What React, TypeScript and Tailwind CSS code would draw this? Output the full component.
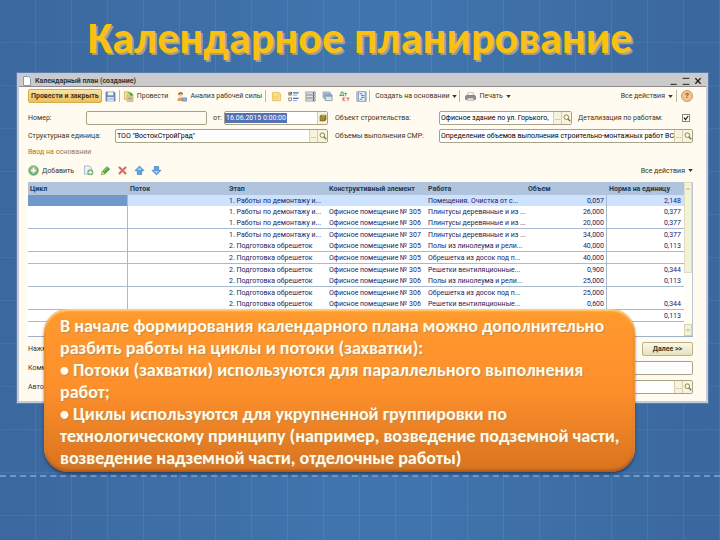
import type { ReactNode } from "react";
import clsx from "clsx";

interface PlanRow {
  stage: string;
  element: string;
  work: string;
  volume: string;
  norm: string;
  line?: boolean;
}

const DEMOLITION = "1. Работы по демонтажу и...";
const LATHING = "2. Подготовка обрешеток";

const rows: PlanRow[] = [
  { stage: DEMOLITION, element: "", work: "Помещения. Очистка от с...", volume: "0,057", norm: "2,148" },
  { stage: DEMOLITION, element: "Офисное помещение № 305", work: "Плинтусы деревянные и из ...", volume: "26,000", norm: "0,377" },
  { stage: DEMOLITION, element: "Офисное помещение № 306", work: "Плинтусы деревянные и из ...", volume: "20,000", norm: "0,377", line: true },
  { stage: DEMOLITION, element: "Офисное помещение № 307", work: "Плинтусы деревянные и из ...", volume: "34,000", norm: "0,377" },
  { stage: LATHING, element: "Офисное помещение № 305", work: "Полы из линолеума и рели...", volume: "40,000", norm: "0,113", line: true },
  { stage: LATHING, element: "Офисное помещение № 305", work: "Обрешетка из досок под п...", volume: "40,000", norm: "", line: true },
  { stage: LATHING, element: "Офисное помещение № 305", work: "Решетки вентиляционные...", volume: "0,900", norm: "0,344" },
  { stage: LATHING, element: "Офисное помещение № 306", work: "Полы из линолеума и рели...", volume: "25,000", norm: "0,113", line: true },
  { stage: LATHING, element: "Офисное помещение № 306", work: "Обрешетка из досок под п...", volume: "25,000", norm: "" },
  { stage: LATHING, element: "Офисное помещение № 306", work: "Решетки вентиляционные...", volume: "0,600", norm: "0,344", line: true },
  { stage: "", element: "", work: "", volume: "", norm: "0,113", line: true },
];

function Svg({ children, className = "size-[11px]" }: { children: ReactNode; className?: string }) {
  return (
    <svg viewBox="0 0 12 12" className={clsx("shrink-0", className)} aria-hidden="true">
      {children}
    </svg>
  );
}

const SaveIcon = () => (
  <Svg>
    <path d="M1 1h9l1 1v9H1z" fill="#6f8fb4" stroke="#50719a" strokeWidth=".6" />
    <path d="M3 1.3h6v3.4H3z" fill="#eef4fa" />
    <path d="M2.5 6.5h7V11h-7z" fill="#dfe9f3" />
    <path d="M3.5 8h5M3.5 9.5h5" stroke="#8ba5c0" strokeWidth=".6" />
  </Svg>
);

const PostIcon = () => (
  <Svg>
    <path d="M1.5.8h5l1.6 1.6v6.8H1.5z" fill="#f7e08a" stroke="#b79a3d" strokeWidth=".6" />
    <path d="M4.5 4.5H11v7H4.5z" fill="#f3dc8c" stroke="#b79a3d" strokeWidth=".6" />
    <path d="M5.6 6.7h4.3M5.6 8.2h4.3M5.6 9.7h4.3" stroke="#6e8fb5" strokeWidth=".7" />
    <path d="M5 1.5h3.2c1.2 0 1.8.7 1.8 1.7h1.4L9.2 5.6 7 3.2h1.3c0-.3-.2-.4-.6-.4H5z" fill="#46a33f" />
  </Svg>
);

const PersonIcon = () => (
  <Svg>
    <path d="M1.5 11c0-3 1-4 3.5-4s3.5 1 3.5 4z" fill="#e3a04e" />
    <circle cx="5" cy="4" r="2.4" fill="#f3c9a0" />
    <path d="M2.4 4C2.2.6 7.8.4 7.6 3.8 6.3 3.5 5.4 2.8 4.8 2.6 4.2 3.4 3.3 3.9 2.4 4z" fill="#8a5526" />
    <path d="M7 7.5h4.5V11H7z" fill="#8eb0dc" stroke="#4a70a8" strokeWidth=".6" />
  </Svg>
);

const NoteIcon = () => (
  <Svg>
    <path d="M1.5 1.5h7l2 2v7h-9z" fill="#f9df82" stroke="#d6b046" strokeWidth=".7" />
    <path d="M8.5 1.5v2h2" fill="#fff5ce" stroke="#d6b046" strokeWidth=".6" />
    <path d="M3 6h5M3 8h5" stroke="#e8c659" strokeWidth=".7" />
  </Svg>
);

const ChecklistIcon = () => (
  <Svg>
    <path d="M.8 1.5h3v3h-3zM.8 7.5h3v3h-3z" fill="#fff" stroke="#555" strokeWidth=".7" />
    <path d="m1.3 2.6.9 1L4.2 1" fill="none" stroke="#222" strokeWidth=".8" />
    <path d="M5.5 2h6M5.5 8h6" stroke="#3b70b9" strokeWidth="1.4" />
    <path d="M5.5 4.5h4.5M5.5 10.5h4.5" stroke="#7fa5d8" strokeWidth="1" />
  </Svg>
);

const StackIcon = () => (
  <Svg>
    <path d="M.8 1h10.4v2.6H.8zM.8 4.7h10.4v2.6H.8zM.8 8.4h10.4V11H.8z" fill="#dfe3e8" stroke="#777f89" strokeWidth=".7" />
    <path d="M9.3 1v2.6M9.3 4.7v2.6M9.3 8.4V11" stroke="#4d5560" strokeWidth="1" />
  </Svg>
);

const CopiesIcon = () => (
  <Svg>
    <path d="M1 1h7.5v6H1z" fill="#ccd9e8" stroke="#7b93b0" strokeWidth=".6" />
    <path d="M2.2 2.5h7.5v6H2.2z" fill="#b5cbe4" stroke="#6b88ab" strokeWidth=".6" />
    <path d="M3.5 4.2H11v6.3H3.5z" fill="#dcecc6" stroke="#5d80aa" strokeWidth=".7" />
    <path d="M3.5 4.2H11v2H3.5z" fill="#79a3d6" />
  </Svg>
);

const DebitCreditIcon = () => (
  <Svg>
    <path d="M.8 5.6V4.8h4.4v.8M1.6 4.8C2.2 3.8 2.3 2.4 2.3 1.2h2.2v3.6" fill="none" stroke="#2e9140" strokeWidth=".9" />
    <path d="M5.8 2.6h3M7.3 2.6v2.7" stroke="#2e9140" strokeWidth=".9" />
    <path d="M4.4 6.5V11M7 6.5 4.6 8.8 7.2 11M8 7.8h3.4M9.7 7.8V11" fill="none" stroke="#d44a4a" strokeWidth=".9" />
  </Svg>
);

const ReportIcon = () => (
  <Svg>
    <path d="M.8 .8h10.4v10.4H.8z" fill="#a9c8e8" stroke="#6f93bb" strokeWidth=".6" />
    <path d="M2.8 .8h7v10.4h-7z" fill="#f5faff" stroke="#587ba5" strokeWidth=".6" />
    <path d="M4 3h3M5.5 5H9M5.5 7H9M4 9h3" stroke="#2f5f9b" strokeWidth=".9" />
  </Svg>
);

const PrinterIcon = () => (
  <Svg>
    <path d="M3 1.8h6V5H3z" fill="#fff" stroke="#999" strokeWidth=".6" />
    <path d="M1.2 4.8h9.6l.7 1.2v3.2H.5V6z" fill="#8d8d92" stroke="#5c5c62" strokeWidth=".6" />
    <path d="M2.5 7.6h7v2.6h-7z" fill="#f3e6e2" stroke="#777" strokeWidth=".5" />
  </Svg>
);

const AddIcon = () => (
  <Svg>
    <circle cx="6" cy="6" r="5.3" fill="#74b272" stroke="#5a9459" strokeWidth=".6" />
    <circle cx="6" cy="4.6" r="3.6" fill="#a5d19f" opacity=".6" />
    <path d="M6 3v6M3 6h6" stroke="#fff" strokeWidth="1.7" />
  </Svg>
);

const AddCopyIcon = () => (
  <Svg>
    <path d="M1.5 1h5.5l2.2 2.2V10H1.5z" fill="#eaf1f8" stroke="#8199b4" strokeWidth=".7" />
    <circle cx="8" cy="8" r="3.3" fill="#6db36a" />
    <path d="M8 6v4M6 8h4" stroke="#fff" strokeWidth="1.2" />
  </Svg>
);

const PencilIcon = () => (
  <Svg>
    <path d="M1.5 10.7 2.4 7 7.6 1.8l3 2.5-5.4 5.5z" fill="#4cae3a" stroke="#2c7f23" strokeWidth=".6" />
    <path d="M1.5 10.7 2.4 7l2.8 2.8z" fill="#e8d28c" />
    <path d="M3.8 7.2 8.3 2.7" stroke="#a9de92" strokeWidth=".9" />
  </Svg>
);

const DeleteIcon = () => (
  <Svg>
    <path d="m2 2 8 8M10 2l-8 8" stroke="#e98d84" strokeWidth="2.6" />
    <path d="m2.5 2.5 7 7M9.5 2.5l-7 7" stroke="#cf4c42" strokeWidth="1" />
  </Svg>
);

const ArrowIcon = ({ down }: { down?: boolean }) => (
  <Svg className={clsx("size-[11px]", down && "rotate-180")}>
    <path d="m6 1.2 5 5H8.4v4.2H3.6V6.2H1z" fill="#5fa2dd" stroke="#3f7cba" strokeWidth=".7" />
    <path d="M6 2.8 8.6 5.4H3.4z" fill="#a8d2f3" />
  </Svg>
);

const SearchIcon = () => (
  <Svg className="size-2">
    <circle cx="5" cy="4.8" r="3.4" fill="#fdfbe8" stroke="#7d7443" strokeWidth="1.3" />
    <path d="m7.4 7.2 3.4 3.6" stroke="#7d7443" strokeWidth="2" />
  </Svg>
);

const CalendarIcon = () => (
  <Svg className="size-2">
    <path d="M3 1h8v7.5L9 11H1V3z" fill="#8a7426" />
    <path d="M2.5 5h2M5.7 5h2M2.5 7.7h2M5.7 7.7h2M4.3 2.5h5" stroke="#e9dca0" strokeWidth="1" />
  </Svg>
);

const Caret = () => (
  <svg viewBox="0 0 6 4" className="h-[3px] w-[5px] shrink-0" aria-hidden="true">
    <path d="M0 0h6L3 4z" fill="#3d3420" />
  </svg>
);

const Divider = () => <span className="h-3 w-px shrink-0 bg-[#c9b98f]" />;

function ToolButton({ label, children }: { label?: string; children: ReactNode }) {
  return (
    <button type="button" aria-label={label} className="flex shrink-0 items-center gap-[3px] whitespace-nowrap">
      {children}
    </button>
  );
}

interface FieldProps {
  id: string;
  value?: string;
  muted?: boolean;
  picker?: boolean;
}

function Field({ id, value = "", muted, picker }: FieldProps) {
  return (
    <div className={clsx("flex h-3.5 min-w-0 flex-1 overflow-hidden rounded-xs border border-[#a8a287]", muted ? "bg-[#fffbf0]" : "bg-white")}>
      <input id={id} defaultValue={value} className="min-w-0 flex-1 bg-transparent pl-px text-black outline-none" />
      {picker && (
        <>
          <button type="button" aria-label="Выбрать" className="flex w-2 items-center justify-center border-l border-[#d5cfae] bg-[#f7f3dc] text-[#7d7443]">...</button>
          <button type="button" aria-label="Открыть" className="flex w-2.5 items-center justify-center border-l border-[#d5cfae] bg-[#f7f3dc]">
            <SearchIcon />
          </button>
        </>
      )}
    </div>
  );
}

function Toolbar() {
  return (
    <div className="flex h-3.5 items-center">
      <button type="button" className="h-3.5 shrink-0 whitespace-nowrap rounded-xs border border-[#d5ab4c] bg-linear-to-b from-[#fbe3a0] to-[#ebc05c] px-[2px] font-bold">
        Провести и закрыть
      </button>
      <div className="ml-[3px] flex items-center gap-[3px]">
        <ToolButton label="Записать"><SaveIcon /></ToolButton>
        <Divider />
        <ToolButton><PostIcon />Провести</ToolButton>
      </div>
      <div className="ml-2 flex items-center gap-[3px]">
        <ToolButton><PersonIcon />Анализ рабочей силы</ToolButton>
        <Divider />
      </div>
      <div className="ml-[5px] flex items-center gap-1.5">
        <ToolButton label="Заметка"><NoteIcon /></ToolButton>
        <ToolButton label="Список задач"><ChecklistIcon /></ToolButton>
        <ToolButton label="Структура"><StackIcon /></ToolButton>
        <ToolButton label="Копии"><CopiesIcon /></ToolButton>
        <ToolButton label="Проводки"><DebitCreditIcon /></ToolButton>
        <ToolButton label="Отчет"><ReportIcon /></ToolButton>
      </div>
      <div className="ml-[2px] flex items-center gap-[5px]">
        <Divider />
        <ToolButton>Создать на основании<Caret /></ToolButton>
      </div>
      <div className="ml-[2px] flex items-center gap-[5px]">
        <Divider />
        <ToolButton><PrinterIcon />Печать<Caret /></ToolButton>
      </div>
      <div className="ml-auto flex items-center gap-[3px]">
        <ToolButton>Все действия<Caret /></ToolButton>
        <Divider />
        <button type="button" aria-label="Справка" className="ml-px flex size-3 items-center justify-center rounded-full border border-[#c99a63] bg-[#efc692] text-[8px] font-bold text-[#9a5420]">?</button>
      </div>
    </div>
  );
}

function PlanTable() {
  return (
    <div className="flex h-[155px] overflow-hidden border-b border-[#9fb3c8] bg-white">
      <div className="min-w-0 flex-1">
        <table className="w-full table-fixed border-separate border-spacing-0 text-[#1c1c5c]">
          <colgroup>
            <col className="w-[100px]" />
            <col className="w-[99px]" />
            <col className="w-[100px]" />
            <col className="w-[99px]" />
            <col className="w-[100px]" />
            <col className="w-[81px]" />
            <col className="w-[77px]" />
          </colgroup>
          <thead>
            <tr className="h-[13px] bg-[#b0c4de] text-left text-[#1d3a52]">
              {["Цикл", "Поток", "Этап", "Конструктивный элемент", "Работа", "Объем", "Норма на единицу"].map((title) => (
                <th key={title} className="whitespace-nowrap p-0 pl-[2px] font-bold">{title}</th>
              ))}
            </tr>
          </thead>
          <tbody>
            {rows.map((row, i) => {
              const line = row.line && "border-b border-[#a9bacd]";
              const text = clsx("whitespace-nowrap p-0 pl-[2px]", line);
              return (
                <tr key={i} className={clsx(row.line ? "h-3" : "h-[11px]", i === 0 && "bg-[#cce2ff]")}>
                  <td className={clsx("border-r border-r-[#a9bacd] p-0", line, i === 0 && "bg-[#7198cc]")} />
                  <td className={clsx("p-0", line)} />
                  <td className={text}>{row.stage}</td>
                  <td className={text}>{row.element}</td>
                  <td className={text}>{row.work}</td>
                  <td className={clsx("border-r border-r-[#a9bacd] p-0 pr-[2px] text-right", line)}>{row.volume}</td>
                  <td className={clsx("p-0 pr-[3px] text-right", line)}>{row.norm}</td>
                </tr>
              );
            })}
          </tbody>
        </table>
      </div>
      <div className="flex w-[9px] flex-col justify-between border-r border-[#b9c6cf] bg-[#fffdf4]">
        <div className="h-[91px] border border-[#e0dcbc] bg-[#f3f1d6]">
          <svg viewBox="0 0 8 12" className="h-3 w-full" aria-hidden="true">
            <path d="m2 7 2-2 2 2" fill="none" stroke="#8b8452" />
          </svg>
        </div>
        <div className="border border-[#d8d3ac] bg-[#f3f1d6]">
          <svg viewBox="0 0 8 12" className="h-2.5 w-full" aria-hidden="true">
            <path d="m2 5 2 2 2-2" fill="none" stroke="#8b8452" />
          </svg>
        </div>
      </div>
    </div>
  );
}

function PlanWindow() {
  return (
    <section className="border-2 border-[#c3cbd6] bg-[#fffbf0] font-[Roboto,sans-serif] text-[7px] leading-[10px] text-[#3d3420] outline outline-[#5d7ba6]">
      <header className="flex h-3 items-center gap-1 border-b border-[#8f8a88] bg-[#cbcbcb] px-1 font-bold text-[#333]">
        <svg viewBox="0 0 8 10" className="h-2.5 w-2" aria-hidden="true">
          <path d="M.5.5h5l2 2v7h-7z" fill="#fff" stroke="#8b9bb0" />
        </svg>
        <span className="flex-1">Календарный план (создание)</span>
        <button type="button" aria-label="Свернуть">
          <Svg className="size-2"><path d="M1 11h9" stroke="#222" strokeWidth="1.5" /></Svg>
        </button>
        <button type="button" aria-label="Развернуть">
          <Svg className="size-2"><path d="M1 2h10M1 11h10" stroke="#222" strokeWidth="1.5" /></Svg>
        </button>
        <button type="button" aria-label="Закрыть">
          <Svg className="size-2"><path d="m2 2 8 8M10 2l-8 8" stroke="#222" strokeWidth="2" /></Svg>
        </button>
      </header>

      <div className="pb-[7px] pl-[9px] pr-[13px] pt-0.5">
        <Toolbar />

        <div className="mt-2 grid grid-cols-[300fr_358fr] gap-x-[7px] gap-y-1">
          <div className="flex items-center">
            <label htmlFor="number" className="w-[58px]">Номер:</label>
            <Field id="number" muted />
            <label htmlFor="date" className="ml-1.5 w-[11px]">от:</label>
            <div className="flex h-3.5 w-[104px] items-center justify-between overflow-hidden rounded-xs border border-[#a8a287] bg-white">
              <input id="date" defaultValue="16.06.2015 0:00:00" className="w-[62px] bg-[#5570b5] pl-px text-white outline-none" />
              <button type="button" aria-label="Календарь" className="flex h-full w-2.5 items-center justify-center border-l border-[#d5cfae] bg-[#f7f3dc]">
                <CalendarIcon />
              </button>
            </div>
          </div>
          <div className="flex items-center">
            <label htmlFor="object" className="w-[104px]">Объект строительства:</label>
            <Field id="object" value="Офисное здание по ул. Горького," picker />
            <label htmlFor="detail" className="ml-1.5 w-[104px]">Детализация по работам:</label>
            <span className="relative mr-[3px] flex size-2">
              <input id="detail" type="checkbox" defaultChecked className="peer size-2 appearance-none border border-[#8a8672] bg-white" />
              <Svg className="pointer-events-none invisible absolute inset-0 size-2 peer-checked:visible">
                <path d="m3 5.5 2.3 3 4-5.5" fill="none" stroke="#222" strokeWidth="1.8" />
              </Svg>
            </span>
          </div>
          <div className="flex items-center">
            <label htmlFor="unit" className="w-[87px]">Структурная единица:</label>
            <Field id="unit" value={'ТОО "ВостокСтройГрад"'} picker />
          </div>
          <div className="flex items-center">
            <label htmlFor="scope" className="w-[104px]">Объемы выполнения СМР:</label>
            <Field id="scope" value="Определение объемов выполнения строительно-монтажных работ ВС" picker />
          </div>
        </div>

        <a href="#basis" className="mt-1 block text-[#a5792a]">Ввод на основании</a>

        <div className="mb-1.5 mt-2 flex items-center gap-[5px]">
          <ToolButton><AddIcon />Добавить</ToolButton>
          <div className="ml-1 flex gap-1.5">
            <ToolButton label="Скопировать"><AddCopyIcon /></ToolButton>
            <ToolButton label="Изменить"><PencilIcon /></ToolButton>
            <ToolButton label="Удалить"><DeleteIcon /></ToolButton>
            <ToolButton label="Вверх"><ArrowIcon /></ToolButton>
            <ToolButton label="Вниз"><ArrowIcon down /></ToolButton>
          </div>
          <div className="ml-auto">
            <ToolButton>Все действия<Caret /></ToolButton>
          </div>
        </div>

        <PlanTable />

        <div className="mt-[5px] flex flex-col gap-[5px]">
          <div className="flex items-center justify-between">
            <span>Нажм</span>
            <button type="button" className="h-3.5 w-[51px] rounded-xs border border-[#b9b28a] bg-linear-to-b from-[#fbf9e8] to-[#e6e1bd] font-bold">Далее &gt;&gt;</button>
          </div>
          <div className="flex items-center">
            <label htmlFor="comment" className="w-[58px]">Комм</label>
            <Field id="comment" />
          </div>
          <div className="flex items-center">
            <label htmlFor="author" className="w-[58px]">Автор</label>
            <Field id="author" picker />
          </div>
        </div>
      </div>
    </section>
  );
}

function Callout() {
  return (
    <aside className="absolute left-[27px] right-[73px] top-[236px] rounded-[24px] bg-linear-to-b from-[#ff9a2e] via-[#fd8f2b] to-[#d9731f] pb-[3px] pl-4 pr-2 pt-[6px] font-[Carlito,Lato,sans-serif] text-[18px] font-bold leading-[22px] text-[#fffbe6] shadow-[0_2px_3px_rgba(20,30,60,.6),inset_0_2px_2px_#ffd27a,inset_0_-2px_3px_#a9581a] [text-shadow:1px_1px_1px_#b98a55]">
      <p>В начале формирования календарного плана можно дополнительно разбить работы на циклы и потоки (захватки):</p>
      <ul>
        <li>• Потоки (захватки) используются для параллельного выполнения работ;</li>
        <li>• Циклы используются для укрупненной группировки по технологическому принципу (например, возведение подземной части, возведение надземной части, отделочные работы)</li>
      </ul>
    </aside>
  );
}

export default function App() {
  return (
    <main className="min-h-screen bg-[#3f72a9] bg-[repeating-linear-gradient(90deg,transparent_0_35px,rgba(150,195,235,.13)_35px_36px),repeating-linear-gradient(180deg,transparent_0_42px,rgba(150,195,235,.1)_42px_43px),linear-gradient(90deg,#3b689e,#4074ac_45%,#4074ac_60%,#3a679d)]">
      <h1 className="h-[73px] pt-3.5 text-center font-[Carlito,Lato,sans-serif] text-[44px] font-bold leading-[48px] text-[#fcc010] [text-shadow:2px_2px_0_#a0a08c]">
        Календарное планирование
      </h1>
      <div className="relative ml-[17px] mr-3">
        <PlanWindow />
        <Callout />
      </div>
      <hr className="mt-[72px] border-t-2 border-dashed border-[#86aeda]/70" />
    </main>
  );
}
